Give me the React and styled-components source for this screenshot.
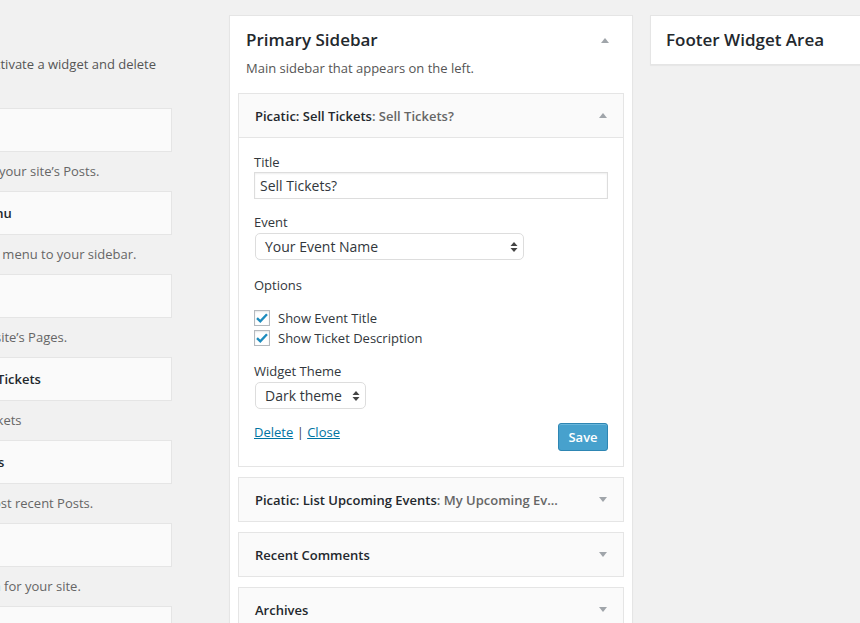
import React from 'react'
import styled, { createGlobalStyle } from 'styled-components'

const GlobalStyle = createGlobalStyle`
  html, body { margin: 0; padding: 0; background: #f1f1f1; }
  body {
    font-family: "Open Sans", "Noto Sans", sans-serif;
    font-size: 13px;
    color: #444;
    overflow: hidden;
  }
`

const available = [
  { title: 'Calendar', desc: 'A calendar of your site’s Posts.' },
  { title: 'Custom Menu', desc: 'Add a custom menu to your sidebar.' },
  { title: 'Pages', desc: 'A list of your site’s Pages.' },
  { title: 'Picatic: Sell Tickets', desc: 'Sell Picatic tickets' },
  { title: 'Recent Posts', desc: 'Your site’s most recent Posts.' },
  { title: 'Search', desc: 'A search form for your site.' },
  { title: 'Text', desc: 'Arbitrary text or HTML.' },
]

const collapsed = [
  { title: 'Picatic: List Upcoming Events', sub: 'My Upcoming Ev...' },
  { title: 'Recent Comments' },
  { title: 'Archives' },
]

const Page = styled.div`
  display: flex;
  align-items: flex-start;
  width: 860px;
  height: 623px;
  overflow: hidden;
`

const LeftArea = styled.div`
  flex: none;
  width: 229px;
  align-self: stretch;
  overflow: hidden;
`

const Intro = styled.div`
  display: flex;
  justify-content: flex-end;
  width: 156px;
  margin-top: 55px;
  white-space: nowrap;
  line-height: 18px;
  color: #555;
`

const CardColumn = styled.div`
  width: 264px;
  margin: 35px 0 0 -92px;
`

const Card = styled.div`
  box-sizing: border-box;
  height: 44px;
  padding: 0 15px;
  background: #fafafa;
  border: 1px solid #e5e5e5;
  font-weight: 600;
  line-height: 42px;
  color: #23282d;
  white-space: nowrap;
`

const CardDesc = styled.div`
  padding: 10px 8px 11px;
  line-height: 18px;
  color: #666;
  white-space: nowrap;
`

const Panel = styled.section`
  flex: none;
  box-sizing: border-box;
  width: ${p => p.$width}px;
  margin: 15px 0 0 ${p => p.$gap || 0}px;
  min-height: ${p => p.$minHeight || 0}px;
  padding: 0 8px;
  background: #fff;
  border: 1px solid #e5e5e5;
  box-shadow: 0 1px 1px rgba(0, 0, 0, 0.04);
`

const PanelHead = styled.div`
  display: flex;
  align-items: center;
  justify-content: space-between;
  padding: 13px 15px 0 ${p => p.$indent ?? 8}px;
`

const PanelTitle = styled.h2`
  margin: 0;
  font-size: 17px;
  font-weight: 600;
  line-height: 22px;
  color: #23282d;
  white-space: nowrap;
`

const PanelDesc = styled.p`
  margin: 8px 0 16px 8px;
  line-height: 18px;
  color: #555;
`

const Arrow = styled.span`
  width: 0;
  height: 0;
  border-left: 4px solid transparent;
  border-right: 4px solid transparent;
  ${p => p.$down
    ? 'border-top: 5px solid #a0a5aa;'
    : 'border-bottom: 5px solid #a0a5aa;'}
`

const Widget = styled.div`
  margin-bottom: 10px;
  border: 1px solid #e5e5e5;
  background: #fff;
`

const WidgetHead = styled.div`
  display: flex;
  align-items: center;
  justify-content: space-between;
  height: 43px;
  padding: 0 16px;
  background: #fafafa;
  border-bottom: ${p => (p.$open ? '1px solid #e5e5e5' : '0')};
`

const WidgetTitle = styled.div`
  font-weight: 600;
  color: #23282d;
  white-space: nowrap;
`

const InTitle = styled.span`
  color: #666;
`

const WidgetBody = styled.div`
  padding: 15px 15px 15px;
`

const Label = styled.div`
  margin: ${p => p.$top || 0}px 0 1px;
  line-height: 18px;
  color: #32373c;
`

const TextInput = styled.div`
  box-sizing: border-box;
  height: 27px;
  padding: 0 5px;
  border: 1px solid #ddd;
  box-shadow: inset 0 1px 2px rgba(0, 0, 0, 0.07);
  font-size: 14px;
  line-height: 25px;
  color: #32373c;
`

const Select = styled.div`
  box-sizing: border-box;
  display: flex;
  align-items: center;
  justify-content: space-between;
  width: ${p => p.$width}px;
  height: 27px;
  margin: 2px 0 0 1px;
  padding: 0 5px 0 9px;
  border: 1px solid #ddd;
  border-radius: 5px;
  background: #fff;
  font-size: 14px;
  color: #32373c;
`

const Check = styled.label`
  display: flex;
  align-items: center;
  gap: 8px;
  height: 20px;
  color: #32373c;
`

const Box = styled.span`
  box-sizing: border-box;
  display: flex;
  align-items: center;
  justify-content: center;
  width: 16px;
  height: 16px;
  border: 1px solid #b4b9be;
  background: #fff;
  box-shadow: inset 0 1px 2px rgba(0, 0, 0, 0.1);
`

const Options = styled.div`
  margin-top: 14px;
`

const Actions = styled.div`
  display: flex;
  align-items: flex-start;
  justify-content: space-between;
  margin-top: 14px;
`

const Links = styled.div`
  line-height: 18px;
  color: #444;

  a { color: #0074a2; text-decoration: underline; }
`

const SaveButton = styled.button`
  box-sizing: border-box;
  width: 50px;
  height: 28px;
  padding: 0;
  border: 1px solid #2e86b3;
  border-radius: 3px;
  background: #47a1cd;
  box-shadow: inset 0 1px 0 rgba(140, 205, 235, 0.5);
  font-family: inherit;
  font-size: 13px;
  font-weight: 600;
  color: #fff;
`

const SelectArrows = () => (
  <svg width="8" height="12" viewBox="0 0 8 12">
    <path d="M4 1 L7.5 5 H0.5 Z" fill="#444" />
    <path d="M4 11 L7.5 7 H0.5 Z" fill="#444" />
  </svg>
)

const Tick = () => (
  <svg width="12" height="10" viewBox="0 0 12 10">
    <path d="M1 5.2 L4.3 8.3 L11 1.2" fill="none" stroke="#1e8cbe" strokeWidth="2.4" />
  </svg>
)

const App = () => {
  return (
    <>
      <GlobalStyle />
      <Page>
        <LeftArea>
          <Intro>
            <span>To activate a widget drag it to a sidebar or click on it. To deactivate a widget and delete</span>
          </Intro>
          <CardColumn>
            {available.map(w => (
              <div key={w.title}>
                <Card>{w.title}</Card>
                <CardDesc>{w.desc}</CardDesc>
              </div>
            ))}
          </CardColumn>
        </LeftArea>

        <Panel $width={404} $minHeight={700}>
          <PanelHead>
            <PanelTitle>Primary Sidebar</PanelTitle>
            <Arrow />
          </PanelHead>
          <PanelDesc>Main sidebar that appears on the left.</PanelDesc>

          <Widget>
            <WidgetHead $open>
              <WidgetTitle>
                Picatic: Sell Tickets<InTitle>: Sell Tickets?</InTitle>
              </WidgetTitle>
              <Arrow />
            </WidgetHead>
            <WidgetBody>
              <Label>Title</Label>
              <TextInput>Sell Tickets?</TextInput>

              <Label $top={14}>Event</Label>
              <Select $width={269}>
                <span>Your Event Name</span>
                <SelectArrows />
              </Select>

              <Label $top={16}>Options</Label>
              <Options>
                <Check><Box><Tick /></Box>Show Event Title</Check>
                <Check><Box><Tick /></Box>Show Ticket Description</Check>
              </Options>

              <Label $top={14}>Widget Theme</Label>
              <Select $width={111}>
                <span>Dark theme</span>
                <SelectArrows />
              </Select>

              <Actions>
                <Links>
                  <a href="#">Delete</a> | <a href="#">Close</a>
                </Links>
                <SaveButton>Save</SaveButton>
              </Actions>
            </WidgetBody>
          </Widget>

          {collapsed.map(w => (
            <Widget key={w.title}>
              <WidgetHead>
                <WidgetTitle>
                  {w.title}
                  {w.sub && <InTitle>: {w.sub}</InTitle>}
                </WidgetTitle>
                <Arrow $down />
              </WidgetHead>
            </Widget>
          ))}
        </Panel>

        <Panel $width={260} $gap={17}>
          <PanelHead $indent={7}>
            <PanelTitle>Footer Widget Area</PanelTitle>
          </PanelHead>
          <div style={{ height: 13 }} />
        </Panel>
      </Page>
    </>
  )
}

export default App
